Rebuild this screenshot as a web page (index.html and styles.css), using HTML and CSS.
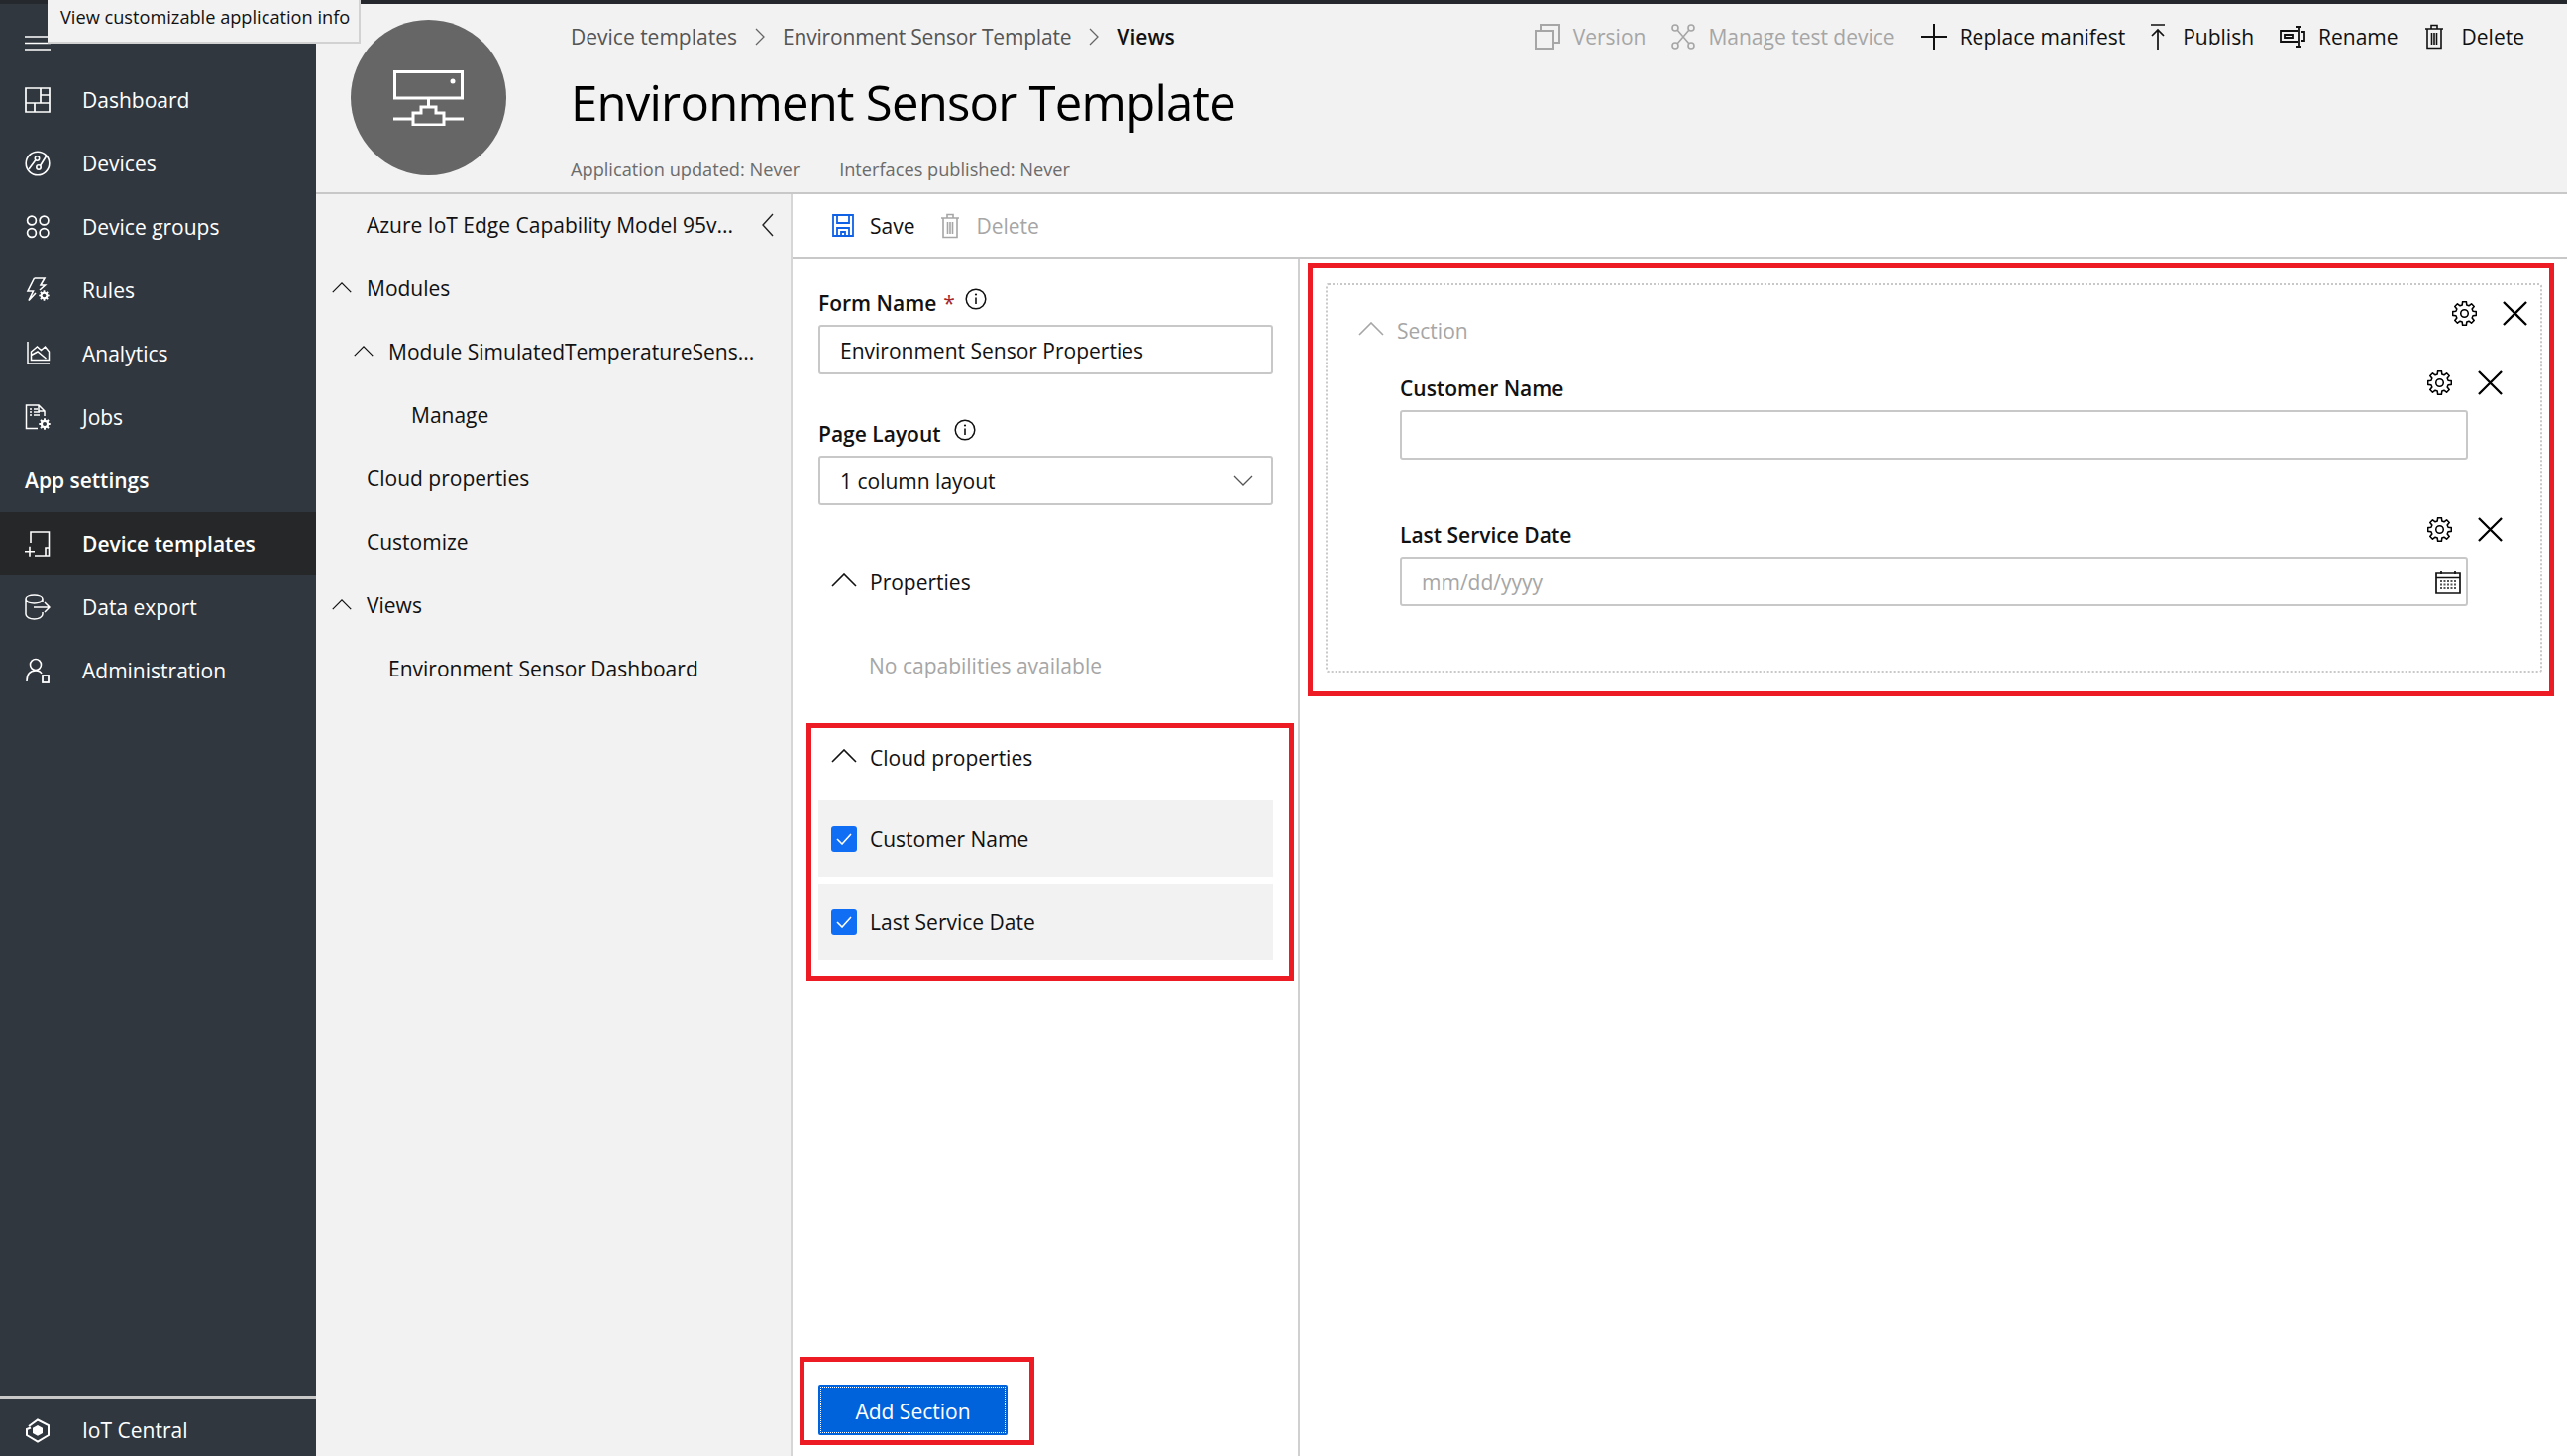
FILE: index.html
```html
<!DOCTYPE html>
<html>
<head>
    <meta http-equiv="Content-Type" content="text/html; charset=utf-8">
    <title>Environment Sensor Template</title>
    <link rel="stylesheet" href="styles.css">
</head>
<body>
    <svg class="defs" width="0" height="0">
        <symbol id="gear" viewBox="0 0 24 24">
            <polygon points="23.36,13.8 20.21,14.2 19.36,16.25 21.3,18.76 18.76,21.3 16.25,19.36 14.2,20.21 13.8,23.36 10.2,23.36 9.8,20.21 7.75,19.36 5.24,21.3 2.7,18.76 4.64,16.25 3.79,14.2 .64,13.8 .64,10.2 3.79,9.8 4.64,7.75 2.7,5.24 5.24,2.7 7.75,4.64 9.8,3.79 10.2,.64 13.8,.64 14.2,3.79 16.25,4.64 18.76,2.7 21.3,5.24 19.36,7.75 20.21,9.8 23.36,10.2" fill="none" stroke="currentColor" stroke-width="1.5" stroke-linejoin="round"/>
            <circle cx="12" cy="12" r="3.6" fill="none" stroke="currentColor" stroke-width="1.5"/>
        </symbol>
        <symbol id="gear-solid" viewBox="0 0 24 24">
            <polygon points="23.36,13.8 20.21,14.2 19.36,16.25 21.3,18.76 18.76,21.3 16.25,19.36 14.2,20.21 13.8,23.36 10.2,23.36 9.8,20.21 7.75,19.36 5.24,21.3 2.7,18.76 4.64,16.25 3.79,14.2 .64,13.8 .64,10.2 3.79,9.8 4.64,7.75 2.7,5.24 5.24,2.7 7.75,4.64 9.8,3.79 10.2,.64 13.8,.64 14.2,3.79 16.25,4.64 18.76,2.7 21.3,5.24 19.36,7.75 20.21,9.8 23.36,10.2" fill="currentColor"/>
            <circle cx="12" cy="12" r="4" fill="#30373f"/>
        </symbol>
        <symbol id="close" viewBox="0 0 26 26">
            <path d="M1 1L25 25M25 1L1 25" fill="none" stroke="currentColor" stroke-width="2.4"/>
        </symbol>
        <symbol id="up" viewBox="0 0 26 14">
            <path d="M1 13L13 1L25 13" fill="none" stroke="currentColor" stroke-width="1.6"/>
        </symbol>
        <symbol id="info" viewBox="0 0 22 22">
            <circle cx="11" cy="11" r="9.8" fill="none" stroke="currentColor" stroke-width="1.5"/>
            <path d="M11 9.5V16" stroke="currentColor" stroke-width="1.6"/>
            <circle cx="11" cy="6.5" r="1.1" fill="currentColor"/>
        </symbol>
        <symbol id="trash" viewBox="0 0 20 26">
            <path d="M1 5H19M7 5V1.5H13V5M3 5V24.5H17V5M7.5 9V21M10 9V21M12.5 9V21" fill="none" stroke="currentColor" stroke-width="1.6"/>
        </symbol>
    </svg>

    <div class="tooltip">View customizable application info</div>

    <div class="topbar"></div>
    <div class="app">
        <nav class="sidebar">
            <div class="hamburger">
                <svg width="26" height="15" viewBox="0 0 26 15"><path d="M0 1H26M0 7.500H26M0 14H26" stroke="#fff" stroke-width="1.6"/></svg>
            </div>
            <a class="nav-item">
                <svg class="nav-icon" viewBox="0 0 26 26"><path d="M1 1H25V25H1ZM16 1V16M1 16H25M10 16V25M16 8H25" fill="none" stroke="#fff" stroke-width="1.7"/></svg>
                Dashboard
            </a>
            <a class="nav-item">
                <svg class="nav-icon" viewBox="0 0 26 26"><g fill="none" stroke="#fff" stroke-width="1.6"><circle cx="13" cy="13" r="11.8"/><circle cx="12.500" cy="8" r="2.200"/><circle cx="14" cy="17" r="2.200"/><path d="M11 9.500L4 19M15.500 15.500L22 5"/></g></svg>
                Devices
            </a>
            <a class="nav-item">
                <svg class="nav-icon" viewBox="0 0 26 26"><g fill="none" stroke="#fff" stroke-width="1.7"><circle cx="7" cy="6.500" r="4.400"/><circle cx="19.500" cy="6.500" r="4.400"/><circle cx="7" cy="19" r="4.400"/><circle cx="19.500" cy="19" r="4.400"/></g></svg>
                Device groups
            </a>
            <a class="nav-item">
                <svg class="nav-icon" viewBox="0 0 26 26"><path d="M9.500 1H20L16 8H20.500L15 13M9.500 1L3 14H8.500L4 23.500L11 16" fill="none" stroke="#fff" stroke-width="1.6"/><use href="#gear-solid" x="14" y="13" width="11" height="11" color="#fff"/></svg>
                Rules
            </a>
            <a class="nav-item">
                <svg class="nav-icon" viewBox="0 0 26 26"><path d="M3 1V23H25M6.500 19.500V11L12.500 6L16.500 9.500L20.500 6L24.500 11V19.500ZM6.500 14.500L13 11L21.500 18" fill="none" stroke="#fff" stroke-width="1.5"/></svg>
                Analytics
            </a>
            <a class="nav-item">
                <svg class="nav-icon" viewBox="0 0 26 26"><path d="M13 24.500H1.500V1H14L20 7V12M14 1V7H20M5 5H7M5 8H7M5 11H7M9 5H13M9 8H15M9 11H15" fill="none" stroke="#fff" stroke-width="1.5"/><use href="#gear-solid" x="14" y="14" width="12" height="12" color="#fff"/></svg>
                Jobs
            </a>
            <div class="nav-group">App settings</div>
            <a class="nav-item active">
                <svg class="nav-icon" viewBox="0 -2 26 26"><path d="M6 10V-1H24.500V23H10M21 23V15H24.500M0 18.700H10M5 13.700V23.700" fill="none" stroke="#fff" stroke-width="1.6"/></svg>
                Device templates
            </a>
            <a class="nav-item">
                <svg class="nav-icon" viewBox="0 0 26 26"><path d="M18 8V5C18 2.500 14 1 9.500 1S1 2.500 1 5V20C1 23 5 25 9.500 25S18 23 18 20V18M1 5C1 7.500 5 9 9.500 9S18 7.500 18 5M9 13H25M20 8L25 13L20 18" fill="none" stroke="#fff" stroke-width="1.5"/></svg>
                Data export
            </a>
            <a class="nav-item">
                <svg class="nav-icon" viewBox="0 0 26 26"><circle cx="11" cy="7" r="5.500" fill="none" stroke="#fff" stroke-width="1.6"/><path d="M2 24C2 17 5 13 11 13C14 13 16 14 17 16" fill="none" stroke="#fff" stroke-width="1.6"/><rect x="18" y="18" width="6" height="7" fill="none" stroke="#fff" stroke-width="1.8"/></svg>
                Administration
            </a>
            <a class="nav-item nav-foot">
                <svg class="nav-icon" viewBox="0 0 26 26"><path d="M4 9L13 2.500L24 8V18L13 24.500L2 18V12L6 10.500" fill="none" stroke="#fff" stroke-width="2"/><polygon points="13,8 18,10.800 18,16 13,18.800 8,16 8,10.800" fill="#fff"/></svg>
                IoT Central
            </a>
        </nav>

        <div class="main">
            <header class="header">
                <div class="avatar">
                    <svg width="71" height="56" viewBox="0 0 71 56"><path d="M1.500 1.500H69.500V28H1.500ZM35.500 28V37M28 37H43V43H51V55H20V43H28ZM0 49H20M51 49H71" fill="none" stroke="#fff" stroke-width="3"/><circle cx="60" cy="11" r="2.500" fill="#fff"/></svg>
                </div>
                <div class="header-body">
                    <div class="header-top">
                        <div class="crumbs">
                            <span>Device templates</span>
                            <svg class="crumb-sep" viewBox="0 0 10 18"><path d="M1 1L9 9L1 17" fill="none" stroke="#666" stroke-width="1.3"/></svg>
                            <span class="crumb-tight">Environment Sensor Template</span>
                            <svg class="crumb-sep" viewBox="0 0 10 18"><path d="M1 1L9 9L1 17" fill="none" stroke="#666" stroke-width="1.3"/></svg>
                            <span class="crumb-current">Views</span>
                        </div>
                        <div class="actions">
                            <span class="action disabled">
                                <svg width="26" height="26" viewBox="0 0 26 26"><path d="M1 7H19V25H1ZM6 7V1H25V19H19" fill="none" stroke="#a6a6a6" stroke-width="2"/></svg>
                                Version
                            </span>
                            <span class="action disabled">
                                <svg width="24" height="26" viewBox="0 0 24 26"><g fill="none" stroke="#a6a6a6" stroke-width="1.6"><circle cx="4" cy="4" r="3"/><circle cx="20" cy="4" r="3"/><circle cx="4" cy="22" r="3"/><circle cx="20" cy="22" r="3"/><path d="M6 6L18 20M18 6L6 20"/></g></svg>
                                Manage test device
                            </span>
                            <span class="action">
                                <svg width="26" height="26" viewBox="0 0 26 26"><path d="M0 13H26M13 0V26" stroke="#111" stroke-width="2"/></svg>
                                Replace manifest
                            </span>
                            <span class="action spaced">
                                <svg width="14" height="26" viewBox="0 0 14 26"><path d="M0 1H14M7 26V6M1 12L7 6L13 12" fill="none" stroke="#111" stroke-width="1.700"/></svg>
                                Publish
                            </span>
                            <span class="action">
                                <svg width="26" height="26" viewBox="0 0 26 26"><path d="M18 7H1V18H18M5 11H13V14H5ZM19 3V23M16 3H22M16 23H22M22 8H25V17H22" fill="none" stroke="#111" stroke-width="1.800"/></svg>
                                Rename
                            </span>
                            <span class="action spaced">
                                <svg width="20" height="26" color="#111"><use href="#trash"/></svg>
                                Delete
                            </span>
                        </div>
                    </div>
                    <h1 class="title">Environment Sensor Template</h1>
                    <div class="meta">
                        <span>Application updated: Never</span>
                        <span>Interfaces published: Never</span>
                    </div>
                </div>
            </header>

            <div class="content">
                <aside class="tree">
                    <div class="tree-row level0">
                        <span class="tree-slot"></span>
                        <span class="tree-label">Azure IoT Edge Capability Model 95v...</span>
                        <svg class="tree-collapse" viewBox="0 0 12 24"><path d="M11 1L1 12L11 23" fill="none" stroke="#222" stroke-width="1.4"/></svg>
                    </div>
                    <div class="tree-row level0">
                        <svg class="tree-slot" viewBox="0 0 26 14"><use href="#up"/></svg>
                        <span class="tree-label">Modules</span>
                    </div>
                    <div class="tree-row level1">
                        <svg class="tree-slot" viewBox="0 0 26 14"><use href="#up"/></svg>
                        <span class="tree-label">Module SimulatedTemperatureSens...</span>
                    </div>
                    <div class="tree-row level2">
                        <span class="tree-slot"></span>
                        <span class="tree-label">Manage</span>
                    </div>
                    <div class="tree-row level0">
                        <span class="tree-slot"></span>
                        <span class="tree-label">Cloud properties</span>
                    </div>
                    <div class="tree-row level0">
                        <span class="tree-slot"></span>
                        <span class="tree-label">Customize</span>
                    </div>
                    <div class="tree-row level0">
                        <svg class="tree-slot" viewBox="0 0 26 14"><use href="#up"/></svg>
                        <span class="tree-label">Views</span>
                    </div>
                    <div class="tree-row level1">
                        <span class="tree-slot"></span>
                        <span class="tree-label">Environment Sensor Dashboard</span>
                    </div>
                </aside>

                <div class="editor">
                    <div class="editor-bar">
                        <span class="bar-btn">
                            <svg width="22" height="23" viewBox="0 0 22 23"><path d="M1 1H21V22H1ZM5 1V9H17V1M5 22V14H17V22M9 22V18H13V22" fill="none" stroke="#0f62e6" stroke-width="1.800"/></svg>
                            Save
                        </span>
                        <span class="bar-btn disabled">
                            <svg width="20" height="26" color="#a6a6a6"><use href="#trash"/></svg>
                            Delete
                        </span>
                    </div>
                    <div class="editor-body">
                        <div class="form-panel">
                            <div class="field-label first">Form Name <span class="req">*</span>
                                <svg class="info" color="#111"><use href="#info"/></svg>
                            </div>
                            <div class="text-box">Environment Sensor Properties</div>
                            <div class="field-label layout">Page Layout
                                <svg class="info" color="#111"><use href="#info"/></svg>
                            </div>
                            <div class="text-box select">
                                1 column layout
                                <svg width="20" height="11" viewBox="0 0 20 11"><path d="M1 1L10 10L19 1" fill="none" stroke="#555" stroke-width="1.300"/></svg>
                            </div>
                            <div class="group-head props"><svg class="group-chev"><use href="#up"/></svg>Properties</div>
                            <div class="empty-note">No capabilities available</div>

                            <div class="callout cloud">
                                <div class="group-head"><svg class="group-chev"><use href="#up"/></svg>Cloud properties</div>
                                <div class="check-row first-check">
                                    <span class="checkbox"><svg width="16" height="12" viewBox="0 0 16 12"><path d="M1 6L6 11L15 1" fill="none" stroke="#fff" stroke-width="1.600"/></svg></span>
                                    Customer Name
                                </div>
                                <div class="check-row">
                                    <span class="checkbox"><svg width="16" height="12" viewBox="0 0 16 12"><path d="M1 6L6 11L15 1" fill="none" stroke="#fff" stroke-width="1.600"/></svg></span>
                                    Last Service Date
                                </div>
                            </div>

                            <div class="callout add">
                                <button class="add-btn"><span>Add Section</span></button>
                            </div>
                        </div>

                        <div class="canvas">
                            <div class="callout preview">
                                <div class="section-card">
                                    <div class="section-head">
                                        <div class="section-title"><svg class="group-chev"><use href="#up"/></svg>Section</div>
                                        <div class="tools">
                                            <svg class="tool"><use href="#gear"/></svg>
                                            <svg class="tool"><use href="#close"/></svg>
                                        </div>
                                    </div>
                                    <div class="field">
                                        <div class="field-head">
                                            <span class="field-name">Customer Name</span>
                                            <div class="tools">
                                                <svg class="tool"><use href="#gear"/></svg>
                                                <svg class="tool"><use href="#close"/></svg>
                                            </div>
                                        </div>
                                        <div class="text-box wide"></div>
                                    </div>
                                    <div class="field second">
                                        <div class="field-head">
                                            <span class="field-name">Last Service Date</span>
                                            <div class="tools">
                                                <svg class="tool"><use href="#gear"/></svg>
                                                <svg class="tool"><use href="#close"/></svg>
                                            </div>
                                        </div>
                                        <div class="text-box wide date">
                                            <span class="placeholder">mm/dd/yyyy</span>
                                            <svg width="26" height="24" viewBox="0 0 26 24"><path d="M1 3H25V23H1ZM1 7.500H25M6 0V4M20 0V4" fill="none" stroke="#111" stroke-width="1.700"/><path d="M5 11H21M5 14.500H21M5 18H21" stroke="#555" stroke-width="1.800" stroke-dasharray="2 1.500"/></svg>
                                        </div>
                                    </div>
                                </div>
                            </div>
                        </div>
                    </div>
                </div>
            </div>
        </div>
    </div>
</body>
</html>
```

FILE: styles.css
```css
* {
    box-sizing: border-box;
}
html, body {
    margin: 0;
    padding: 0;
    height: 100%;
}
body {
    font-family: "Open Sans", "Noto Sans", Arial, sans-serif;
    font-size: 21px;
    color: #111;
    background-color: #fff;
    overflow: hidden;
    position: relative;
}
.defs {
    position: absolute;
}
.topbar {
    height: 4px;
    background-color: #25282c;
}
.tooltip {
    position: absolute;
    left: 48px;
    top: 0;
    height: 44px;
    width: 316px;
    padding: 0 0 0 13px;
    font-size: 18.2px;
    line-height: 34px;
    background-color: #f2f2f2;
    border-right: 2px solid #d2d2d2;
    border-bottom: 2px solid #d2d2d2;
    white-space: nowrap;
    z-index: 5;
}
.app {
    display: flex;
    height: 1466px;
}

/* left nav */
.sidebar {
    width: 319px;
    flex-shrink: 0;
    background-color: #30373f;
    color: #fff;
    display: flex;
    flex-direction: column;
}
.hamburger {
    height: 65px;
    padding: 25px 0 0 25px;
}
.nav-item {
    height: 64px;
    display: flex;
    align-items: center;
    padding-left: 25px;
    gap: 32px;
}
.nav-icon {
    width: 26px;
    height: 26px;
    flex-shrink: 0;
}
.nav-item.active {
    background-color: #252729;
    font-weight: 600;
}
.nav-group {
    height: 64px;
    line-height: 64px;
    padding-left: 25px;
    font-weight: 600;
}
.nav-foot {
    margin-top: auto;
    height: 61px;
    padding-top: 6px;
    border-top: 3px solid #c8c8c8;
}

/* page header */
.main {
    flex: 1;
    min-width: 0;
    display: flex;
    flex-direction: column;
}
.header {
    height: 192px;
    flex-shrink: 0;
    display: flex;
    background-color: #f2f2f2;
    border-bottom: 2px solid #c8c8c8;
    padding: 16px 43px 0 35px;
}
.avatar {
    width: 157px;
    height: 157px;
    border-radius: 50%;
    background-color: #666;
    display: flex;
    align-items: center;
    justify-content: center;
    flex-shrink: 0;
}
.header-body {
    flex: 1;
    margin-left: 65px;
    margin-top: -16px;
    display: flex;
    flex-direction: column;
}
.header-top {
    height: 66px;
    display: flex;
    justify-content: space-between;
    align-items: center;
}
.crumbs {
    display: flex;
    align-items: center;
    color: #555;
}
.crumb-tight {
    letter-spacing: -0.18px;
}
.crumb-sep {
    width: 10px;
    height: 18px;
    margin: 0 18px;
}
.crumb-current {
    color: #111;
    font-weight: 600;
}
.actions {
    display: flex;
    align-items: center;
    gap: 26px;
}
.action {
    display: flex;
    align-items: center;
    gap: 13px;
}
.action.spaced {
    gap: 18px;
}
.disabled {
    color: #a6a6a6;
}
.title {
    margin: -2px 0 0;
    font-size: 49px;
    font-weight: 400;
    letter-spacing: -0.75px;
    line-height: 70px;
    color: #000;
}
.meta {
    margin-top: 21px;
    display: flex;
    gap: 40px;
    font-size: 18.2px;
    color: #6b6b6b;
}

.content {
    flex: 1;
    display: flex;
    min-height: 0;
}

/* tree column */
.tree {
    width: 481px;
    flex-shrink: 0;
    background-color: #f2f2f2;
    border-right: 2px solid #d6d6d6;
}
.tree-row {
    height: 64px;
    display: flex;
    align-items: center;
    padding-bottom: 3px;
    white-space: nowrap;
}
.level0 {
    padding-left: 16px;
}
.level1 {
    padding-left: 38px;
}
.level2 {
    padding-left: 61px;
}
.tree-slot {
    width: 20px;
    height: 11px;
    margin-right: 15px;
    flex-shrink: 0;
}
.tree-collapse {
    width: 12px;
    height: 24px;
    margin-left: auto;
    margin-right: 17px;
}

/* editor */
.editor {
    flex: 1;
    min-width: 0;
    display: flex;
    flex-direction: column;
}
.editor-bar {
    height: 65px;
    flex-shrink: 0;
    display: flex;
    align-items: center;
    gap: 26px;
    padding-left: 40px;
    border-bottom: 2px solid #c8c8c8;
}
.bar-btn {
    display: flex;
    align-items: center;
    gap: 16px;
}
.editor-body {
    flex: 1;
    display: flex;
    min-height: 0;
}
.form-panel {
    width: 512px;
    flex-shrink: 0;
    border-right: 2px solid #d0d0d0;
    display: flex;
    flex-direction: column;
    padding-left: 26px;
}
.field-label {
    height: 30px;
    font-weight: 600;
    display: flex;
    align-items: center;
    line-height: 30px;
    margin-top: 30px;
}
.field-label.layout {
    margin-top: 45px;
}
.req {
    color: #a4262c;
    font-weight: 400;
    margin-left: 7px;
    margin-right: -3px;
}
.info {
    width: 22px;
    height: 22px;
    margin: -8px 0 0 13px;
}
.text-box {
    width: 459px;
    height: 50px;
    margin-top: 7px;
    display: flex;
    align-items: center;
    padding: 1px 0 0 20px;
    background-color: #fff;
    border: 2px solid #c8c8c8;
    border-radius: 3px;
}
.select {
    justify-content: space-between;
    padding-right: 18px;
}
.group-head {
    height: 30px;
    display: flex;
    align-items: center;
}
.group-head.props {
    margin-top: 63px;
    padding-left: 13px;
}
.group-chev {
    width: 26px;
    height: 14px;
    margin-right: 13px;
    margin-top: -4px;
    flex-shrink: 0;
}
.empty-note {
    height: 30px;
    line-height: 30px;
    margin: 54px 0 0 51px;
    color: #a6a6a6;
}
.callout {
    border: 5px solid #ed1c24;
}
.cloud {
    width: 492px;
    height: 260px;
    margin: 43px 0 0 -12px;
    padding: 15px 0 0 7px;
}
.cloud .group-head {
    padding-left: 13px;
}
.check-row {
    width: 459px;
    height: 77px;
    margin-top: 7px;
    display: flex;
    align-items: center;
    padding-left: 13px;
    background-color: #f2f2f2;
}
.first-check {
    margin-top: 28px;
}
.checkbox {
    width: 26px;
    height: 26px;
    margin-right: 13px;
    border-radius: 3px;
    background-color: #106ef5;
    display: flex;
    align-items: center;
    justify-content: center;
}
.add {
    width: 237px;
    height: 89px;
    margin: auto 0 11px -19px;
    padding: 23px 0 0 14px;
}
.add-btn {
    width: 191px;
    height: 51px;
    padding: 2px;
    font: inherit;
    color: #fff;
    background-color: #0063dc;
    border: 0;
    border-radius: 2px;
}
.add-btn span {
    display: flex;
    align-items: center;
    justify-content: center;
    height: 100%;
    padding-top: 2px;
    border: 1px dotted #fff;
}

/* form preview */
.canvas {
    flex: 1;
    min-width: 0;
    padding: 5px 13px 0 8px;
}
.preview {
    height: 437px;
    padding: 15px 7px 0 13px;
}
.section-card {
    height: 393px;
    border: 2px dotted #c8c8c8;
    border-radius: 3px;
    padding: 16px 13px 0 73px;
}
.section-head {
    display: flex;
    justify-content: flex-end;
    height: 26px;
    position: relative;
}
.section-title {
    position: absolute;
    left: -42px;
    top: 16px;
    display: flex;
    align-items: center;
    color: #a6a6a6;
}
.tools {
    display: flex;
    gap: 26px;
}
.tool {
    width: 25px;
    height: 25px;
    color: #000;
}
.field {
    margin-top: 44px;
}
.field.second {
    margin-top: 58px;
}
.field-head {
    height: 26px;
    display: flex;
    justify-content: space-between;
    padding-right: 25px;
}
.field-name {
    font-weight: 600;
    line-height: 37px;
}
.text-box.wide {
    width: 1078px;
    margin-top: 14px;
}
.date {
    justify-content: space-between;
    padding-right: 5px;
}
.placeholder {
    color: #a6a6a6;
}
```
